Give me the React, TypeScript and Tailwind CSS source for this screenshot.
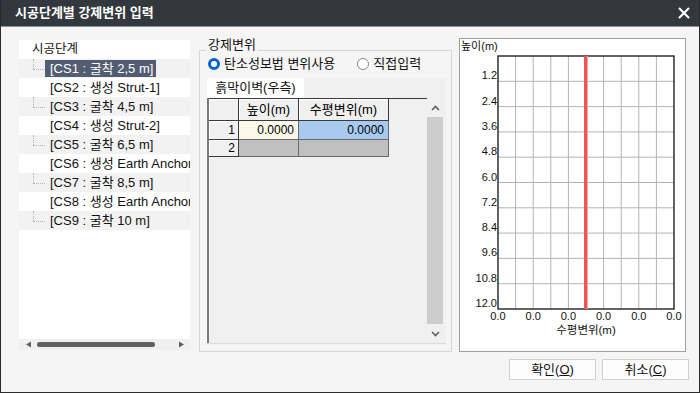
import React from "react";

const FONT = { fontFamily: '"Liberation Sans", "Noto Sans CJK KR", sans-serif' };

const stages = [
  "[CS1 : 굴착 2,5 m]",
  "[CS2 : 생성 Strut-1]",
  "[CS3 : 굴착 4,5 m]",
  "[CS4 : 생성 Strut-2]",
  "[CS5 : 굴착 6,5 m]",
  "[CS6 : 생성 Earth Anchor]",
  "[CS7 : 굴착 8,5 m]",
  "[CS8 : 생성 Earth Anchor]",
  "[CS9 : 굴착 10 m]",
];

function StageTree() {
  return (
    <div className="mt-[2px] flex h-[310px] w-[171px] flex-col bg-white">
      <div className="flex-1 overflow-hidden">
        <div className="flex h-[19px] items-center pl-[13px] text-[12.5px] text-[#111]">시공단계</div>
        {stages.map((s, i) => (
          <div
            key={s}
            className={
              "relative flex h-[19px] items-center whitespace-nowrap text-[13px] " +
              (i % 2 === 0 ? "bg-[#f2f2f2]" : "bg-white")
            }
          >
            {i % 2 === 0 && (
              <>
                <div className="absolute left-[14px] top-0 h-[10px] border-l border-dotted border-[#b4b4b4]" />
                <div className="absolute left-[14px] top-[10px] w-[12px] border-t border-dotted border-[#b4b4b4]" />
              </>
            )}
            <span
              className={
                "ml-[26px] flex h-[17px] items-center pl-[5px] pr-[3px] " +
                (i === 0 ? "bg-[#535d71] text-white" : "text-[#111]")
              }
            >
              {s}
            </span>
          </div>
        ))}
      </div>
      <div className="flex h-[11px] items-center bg-[#f0f0f0]">
        <svg width="18" height="11" viewBox="0 0 18 11">
          <path d="M7 5.5 L12 2.5 L12 8.5 Z" fill="#606060" />
        </svg>
        <div className="h-[5px] w-[118px] rounded-full bg-[#606060]" />
        <div className="flex-1" />
        <svg width="18" height="11" viewBox="0 0 18 11">
          <path d="M12 5.5 L7 2.5 L7 8.5 Z" fill="#606060" />
        </svg>
      </div>
    </div>
  );
}

function Radio({ checked, label }: { checked?: boolean; label: string }) {
  return (
    <div className="flex items-center gap-[4px]">
      {checked ? (
        <div className="h-[12px] w-[12px] rounded-full border-[3.5px] border-[#0a64c8] bg-white" />
      ) : (
        <div className="h-[12px] w-[12px] rounded-full border border-[#8a8a8a] bg-white" />
      )}
      <span className="text-[13px] text-[#111]">{label}</span>
    </div>
  );
}

function Grid() {
  const head = "flex items-center border-r border-b border-[#3a3a3a] bg-[#f0f0f0] shadow-[inset_1px_1px_0_#fff]";
  return (
    <div className="flex h-[246px] w-[239px] border-b border-[#dcdcdc] bg-[#f0f0f0]">
      <div className="w-[2px] bg-[#7a7a7a]" />
      <div className="flex flex-1 flex-col border-t border-[#3a3a3a]">
        <div className="flex h-[22px]">
          <div className={head + " w-[30px]"} />
          <div className={head + " w-[60px] justify-center text-[13px]"}>높이(m)</div>
          <div className={head + " w-[90px] justify-center text-[13px]"}>수평변위(m)</div>
        </div>
        <div className="flex h-[19px]">
          <div className={head + " w-[30px] justify-end pr-[3px] text-[12px]"}>1</div>
          <div className="flex w-[60px] items-center justify-end border-r border-b border-[#6a6a6a] bg-[#fdf8ec] pr-[4px] text-[12px]">
            0.0000
          </div>
          <div className="flex w-[90px] items-center justify-end border-r border-b border-[#6a6a6a] bg-[#a8caf0] pr-[4px] text-[12px]">
            0.0000
          </div>
        </div>
        <div className="flex h-[17px]">
          <div className={head + " w-[30px] justify-end pr-[3px] text-[12px]"}>2</div>
          <div className="w-[60px] border-r border-b border-[#6a6a6a] bg-[#c0c0c0]" />
          <div className="w-[90px] border-r border-b border-[#6a6a6a] bg-[#c0c0c0]" />
        </div>
      </div>
      <div className="flex w-[16px] flex-col bg-[#f0f0f0]">
        <div className="flex h-[19px] items-center justify-center">
          <svg width="9" height="6" viewBox="0 0 9 6">
            <path d="M1 5 L4.5 1.5 L8 5" stroke="#606060" strokeWidth="1.6" fill="none" />
          </svg>
        </div>
        <div className="flex-1 bg-[#cdcdcd]" />
        <div className="flex h-[19px] items-center justify-center">
          <svg width="9" height="6" viewBox="0 0 9 6">
            <path d="M1 1 L4.5 4.5 L8 1" stroke="#606060" strokeWidth="1.6" fill="none" />
          </svg>
        </div>
      </div>
      <div className="w-[3px]" />
    </div>
  );
}

function DisplacementGroup() {
  return (
    <div className="relative ml-[9px] mt-[12px] h-[302px] w-[253px] border border-[#d6d6d6]">
      <div className="absolute left-[6px] top-[-14px] bg-[#f5f5f5] px-[2px] text-[13px] leading-[16px] text-[#111]">
        강제변위
      </div>
      <div className="flex h-[24px] items-center gap-[22px] pl-[8px] pt-[1px]">
        <Radio checked label="탄소성보법 변위사용" />
        <Radio label="직접입력" />
      </div>
      <div className="ml-[7px] mt-[3px] flex h-[20px] w-[239px] bg-[#f0f0f0]">
        <div className="flex w-[97px] items-center justify-center bg-white text-[13px] text-[#111]">
          흙막이벽(우측)
        </div>
      </div>
      <div className="ml-[7px]">
        <Grid />
      </div>
    </div>
  );
}

function Chart() {
  const L = 38;
  const T = 17;
  const W = 176;
  const H = 253;
  const cols = Array.from({ length: 11 }, (_, i) => L + (W / 10) * i);
  const rows = Array.from({ length: 11 }, (_, i) => T + (H / 10) * i);
  const yLabels = ["1.2", "2.4", "3.6", "4.8", "6.0", "7.2", "8.4", "9.6", "10.8", "12.0"];
  return (
    <div className="ml-[7px] h-[314px] w-[227px] border border-[#a0a0a0] bg-white">
      <svg width="225" height="312" viewBox="0 0 225 312" style={{ fontFamily: '"Liberation Sans", "Noto Sans CJK KR", sans-serif' }}>
        <text x="1" y="11" fontSize="11" fill="#111">높이(m)</text>
        {cols.slice(1, 10).map((x) => (
          <line key={"c" + x} x1={x} y1={T} x2={x} y2={T + H} stroke="#b4b4b4" strokeWidth="1" />
        ))}
        {rows.slice(1, 10).map((y) => (
          <line key={"r" + y} x1={L} y1={y} x2={L + W} y2={y} stroke="#b4b4b4" strokeWidth="1" />
        ))}
        <rect x={L} y={T} width={W} height={H} fill="none" stroke="#111" strokeWidth="1.3" />
        <rect x={L + W / 2 - 2} y={T} width="3" height={H} fill="#f05454" />
        <rect x={L + W / 2 + 1} y={T} width="1" height={H} fill="#f6a0a0" />
        {yLabels.map((t, i) => (
          <text key={t} x={L - 1} y={rows[i + 1] - 2} fontSize="11" textAnchor="end" fill="#111">
            {t}
          </text>
        ))}
        {[0, 1, 2, 3, 4, 5].map((i) => (
          <text key={i} x={L + ((W / 5) * i)} y={281} fontSize="11" textAnchor="middle" fill="#111">
            0.0
          </text>
        ))}
        <text x={L + W / 2} y={295} fontSize="11.5" textAnchor="middle" fill="#111">
          수평변위(m)
        </text>
      </svg>
    </div>
  );
}

function Button({ label, hot }: { label: string; hot: string }) {
  return (
    <div className="flex h-[21px] w-[87px] items-center justify-center border border-[#d0d0d0] bg-[#fdfdfd] text-[13px] text-[#111]">
      {label}(<span className="underline">{hot}</span>)
    </div>
  );
}

export default function App() {
  return (
    <div className="flex h-[393px] w-[700px] flex-col border-x border-b border-[#2c2c2c] bg-[#f5f5f5]" style={FONT}>
      <div className="flex h-[27px] items-center justify-between border-b border-[#8a929c] bg-[#33373e] pl-[14px] pr-[9px]">
        <span className="text-[13px] font-bold text-white">시공단계별 강제변위 입력</span>
        <svg width="12" height="12" viewBox="0 0 12 12">
          <path d="M1 1 L11 11 M11 1 L1 11" stroke="#fff" strokeWidth="2.2" />
        </svg>
      </div>
      <div className="flex pl-[18px] pt-[11px]">
        <StageTree />
        <DisplacementGroup />
        <Chart />
      </div>
      <div className="mt-[7px] flex justify-end gap-[6px] pr-[10px]">
        <Button label="확인" hot="O" />
        <Button label="취소" hot="C" />
      </div>
    </div>
  );
}
